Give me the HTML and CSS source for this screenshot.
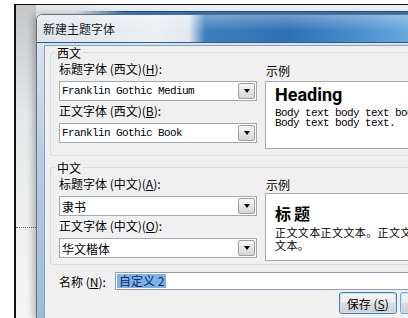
FILE: index.html
```html
<!DOCTYPE html>
<html lang="zh-CN">
<head>
    <meta charset="UTF-8">
    <meta name="viewport" content="width=device-width, initial-scale=1.0">
    <title>新建主题字体</title>
    <link rel="stylesheet" href="styles.css">
</head>
<body>
    <div class="screen">
        <div class="side"><div class="dots"></div></div>
        <div class="main">
            <div class="behind"></div>
            <div class="dialog">
                <div class="titlebar">新建主题字体</div>
                <div class="frame">
                    <div class="client">
                        <fieldset class="group">
                            <legend>西文</legend>
                            <div class="cols">
                                <div class="col">
                                    <div class="lbl">标题字体 (西文)(<u>H</u>):</div>
                                    <div class="combo latin"><span>Franklin Gothic Medium</span><i class="drop"></i></div>
                                    <div class="lbl">正文字体 (西文)(<u>B</u>):</div>
                                    <div class="combo latin"><span>Franklin Gothic Book</span><i class="drop"></i></div>
                                </div>
                                <div class="col">
                                    <div class="lbl sample">示例</div>
                                    <div class="preview">
                                        <div class="head-en">Heading</div>
                                        <div class="body-en">Body text body text body text.<br>Body text body text.</div>
                                    </div>
                                </div>
                            </div>
                        </fieldset>

                        <fieldset class="group second">
                            <legend>中文</legend>
                            <div class="cols">
                                <div class="col">
                                    <div class="lbl">标题字体 (中文)(<u>A</u>):</div>
                                    <div class="combo"><span>隶书</span><i class="drop"></i></div>
                                    <div class="lbl">正文字体 (中文)(<u>O</u>):</div>
                                    <div class="combo"><span>华文楷体</span><i class="drop"></i></div>
                                </div>
                                <div class="col">
                                    <div class="lbl sample">示例</div>
                                    <div class="preview">
                                        <div class="head-cn">标题</div>
                                        <div class="body-cn">正文文本正文文本。正文文本正文<br>文本。</div>
                                    </div>
                                </div>
                            </div>
                        </fieldset>

                        <div class="name-row">
                            <div class="name-lbl">名称 (<u>N</u>):</div>
                            <div class="name-input"><span class="sel">自定义 2</span></div>
                        </div>

                        <div class="actions">
                            <button type="button" class="btn default">保存 (<u>S</u>)</button>
                            <button type="button" class="btn">取消</button>
                        </div>
                    </div>
                </div>
            </div>
        </div>
    </div>
</body>
</html>
```

FILE: styles.css
```css
 body {
     margin: 0;
     width: 408px;
     height: 318px;
     overflow: hidden;
     background: #fff;
     font-family: "Noto Sans CJK SC", "Liberation Sans", sans-serif;
     font-size: 12px;
     color: #000;
 }
 .screen {
     margin: 4px 0 0 14px;
     height: 313px;
     border-top: 1px solid #111;
     border-left: 2px solid #111;
     display: flex;
 }
 .side {
     width: 20px;
     flex: none;
     background: linear-gradient(#c4c6c8, #e6e7e8 35%, #f5f5f5);
 }
 .dots {
     margin-top: 222px;
     border-top: 1px dotted #666;
 }
 .main {
     flex: none;
     width: 430px;
     display: flex;
     flex-direction: column;
 }
 .behind {
     height: 9px;
     background:
         linear-gradient(to right, #e4e6e8 0, #e4e6e8 40px, rgba(228, 230, 232, 0) 90px),
         linear-gradient(#eef1f4 0, #eef1f4 6px, #1d5690 6px, #1d5690 7px, #3a7bbd 7px);
 }
 .dialog {
     flex: 1;
     display: flex;
     flex-direction: column;
     border: 1px solid #5d7188;
     border-bottom: none;
     border-radius: 6px 6px 0 0;
     box-shadow: -3px 0 6px rgba(0, 0, 0, 0.25);
     overflow: hidden;
 }
 .titlebar {
     height: 27px;
     line-height: 27px;
     padding-left: 6px;
     color: #1b1b1b;
     background:
         linear-gradient(rgba(255, 255, 255, 0.3), rgba(255, 255, 255, 0) 60%),
         linear-gradient(to right, #dfe5eb 0, #eceff3 120px, #e2e8ef 152px, #3f7fbd 168px, #2e70b2 250px, #4a8ecd 320px, #6aa8dc 372px);
     border-bottom: 1px solid #2a5a88;
 }
 .frame {
     flex: 1;
     padding: 2px 7px 0;
     background: linear-gradient(#dbe3eb, #b9cde2 40%, #9fbad8);
 }
 .client {
     height: 100%;
     background: #f0f0f0;
     border: 1px solid #8aa1bb;
     border-bottom: none;
 }
 .group {
     margin: 0 0 0 5px;
     padding: 0 8px 6px;
     border: 1px solid #d5dfe5;
     border-radius: 3px;
     min-width: 0;
 }
 .group.second {
     margin-top: 5px;
     padding-bottom: 3px;
 }
 .group legend {
     padding: 0 2px;
     margin-left: -4px;
     line-height: 13px;
 }
 .cols {
     display: grid;
     grid-template-columns: 198px 1fr;
     column-gap: 8px;
     align-items: start;
 }
 .col {
     display: flex;
     flex-direction: column;
 }
 .lbl {
     line-height: 16px;
     padding: 2px 0 4px;
     white-space: nowrap;
 }
 .lbl.sample {
     padding: 4px 0 2px 1px;
 }
 .second .lbl.sample {
     padding: 3px 0 0 1px;
 }
 .combo {
     height: 20px;
     box-sizing: border-box;
     border: 1px solid #a3a9b1;
     background: #fff;
     display: flex;
     align-items: center;
     justify-content: space-between;
     padding: 0 1px 0 2px;
 }
 .combo.latin span {
     font-family: "Liberation Mono", monospace;
     font-size: 11px;
     letter-spacing: -0.6px;
 }
 .drop {
     width: 17px;
     height: 16px;
     box-sizing: border-box;
     border: 1px solid #9c9fa3;
     border-radius: 2px;
     background: linear-gradient(#f7f7f7, #e6e6e6 50%, #d6d6d6);
     display: flex;
     align-items: center;
     justify-content: center;
 }
 .drop::after {
     content: "";
     border-left: 3.5px solid transparent;
     border-right: 3.5px solid transparent;
     border-top: 4px solid #000;
 }
 .preview {
     height: 68px;
     box-sizing: border-box;
     border: 1px solid #a8abb0;
     background: #fff;
     padding: 3px 9px;
     white-space: nowrap;
     overflow: hidden;
 }
 .head-en {
     font-family: Roboto, "Liberation Sans", sans-serif;
     font-weight: 700;
     font-size: 18px;
     line-height: 20px;
 }
 .body-en {
     font-family: "Liberation Mono", monospace;
     font-size: 11px;
     letter-spacing: -0.6px;
     line-height: 10px;
     margin-top: 3px;
 }
 .head-cn {
     font-weight: 700;
     font-size: 16px;
     line-height: 20px;
     letter-spacing: 3px;
     margin-top: 6px;
 }
 .body-cn {
     font-size: 11px;
     line-height: 13px;
     letter-spacing: 0.4px;
     margin-top: 3px;
 }
 .name-row {
     display: flex;
     align-items: center;
     margin-top: 7px;
     padding-left: 14px;
 }
 .name-lbl {
     width: 56px;
     flex: none;
 }
 .name-input {
     flex: 1;
     height: 18px;
     box-sizing: border-box;
     border: 1px solid #8e9cae;
     background: #fff;
     display: flex;
     align-items: center;
     padding-left: 1px;
 }
 .sel {
     line-height: 14px;
     padding: 0 2px;
     background: #7db2e6;
     color: #0e2a66;
 }
 .actions {
     display: flex;
     gap: 3px;
     margin-top: 2px;
     padding-left: 294px;
 }
 .btn {
     width: 60px;
     height: 22px;
     padding: 0;
     font-family: "Noto Sans CJK SC", sans-serif;
     font-size: 12px;
     color: #000;
     border: 1px solid #6fa6d6;
     border-radius: 3px;
     background: linear-gradient(#f3f3f3, #ebebeb 50%, #dddddd 50%, #cfcfcf);
     box-shadow: inset 0 0 0 1px #c9e6f8;
 }
 .btn.default {
     border-color: #3c7fb1;
 }
```
